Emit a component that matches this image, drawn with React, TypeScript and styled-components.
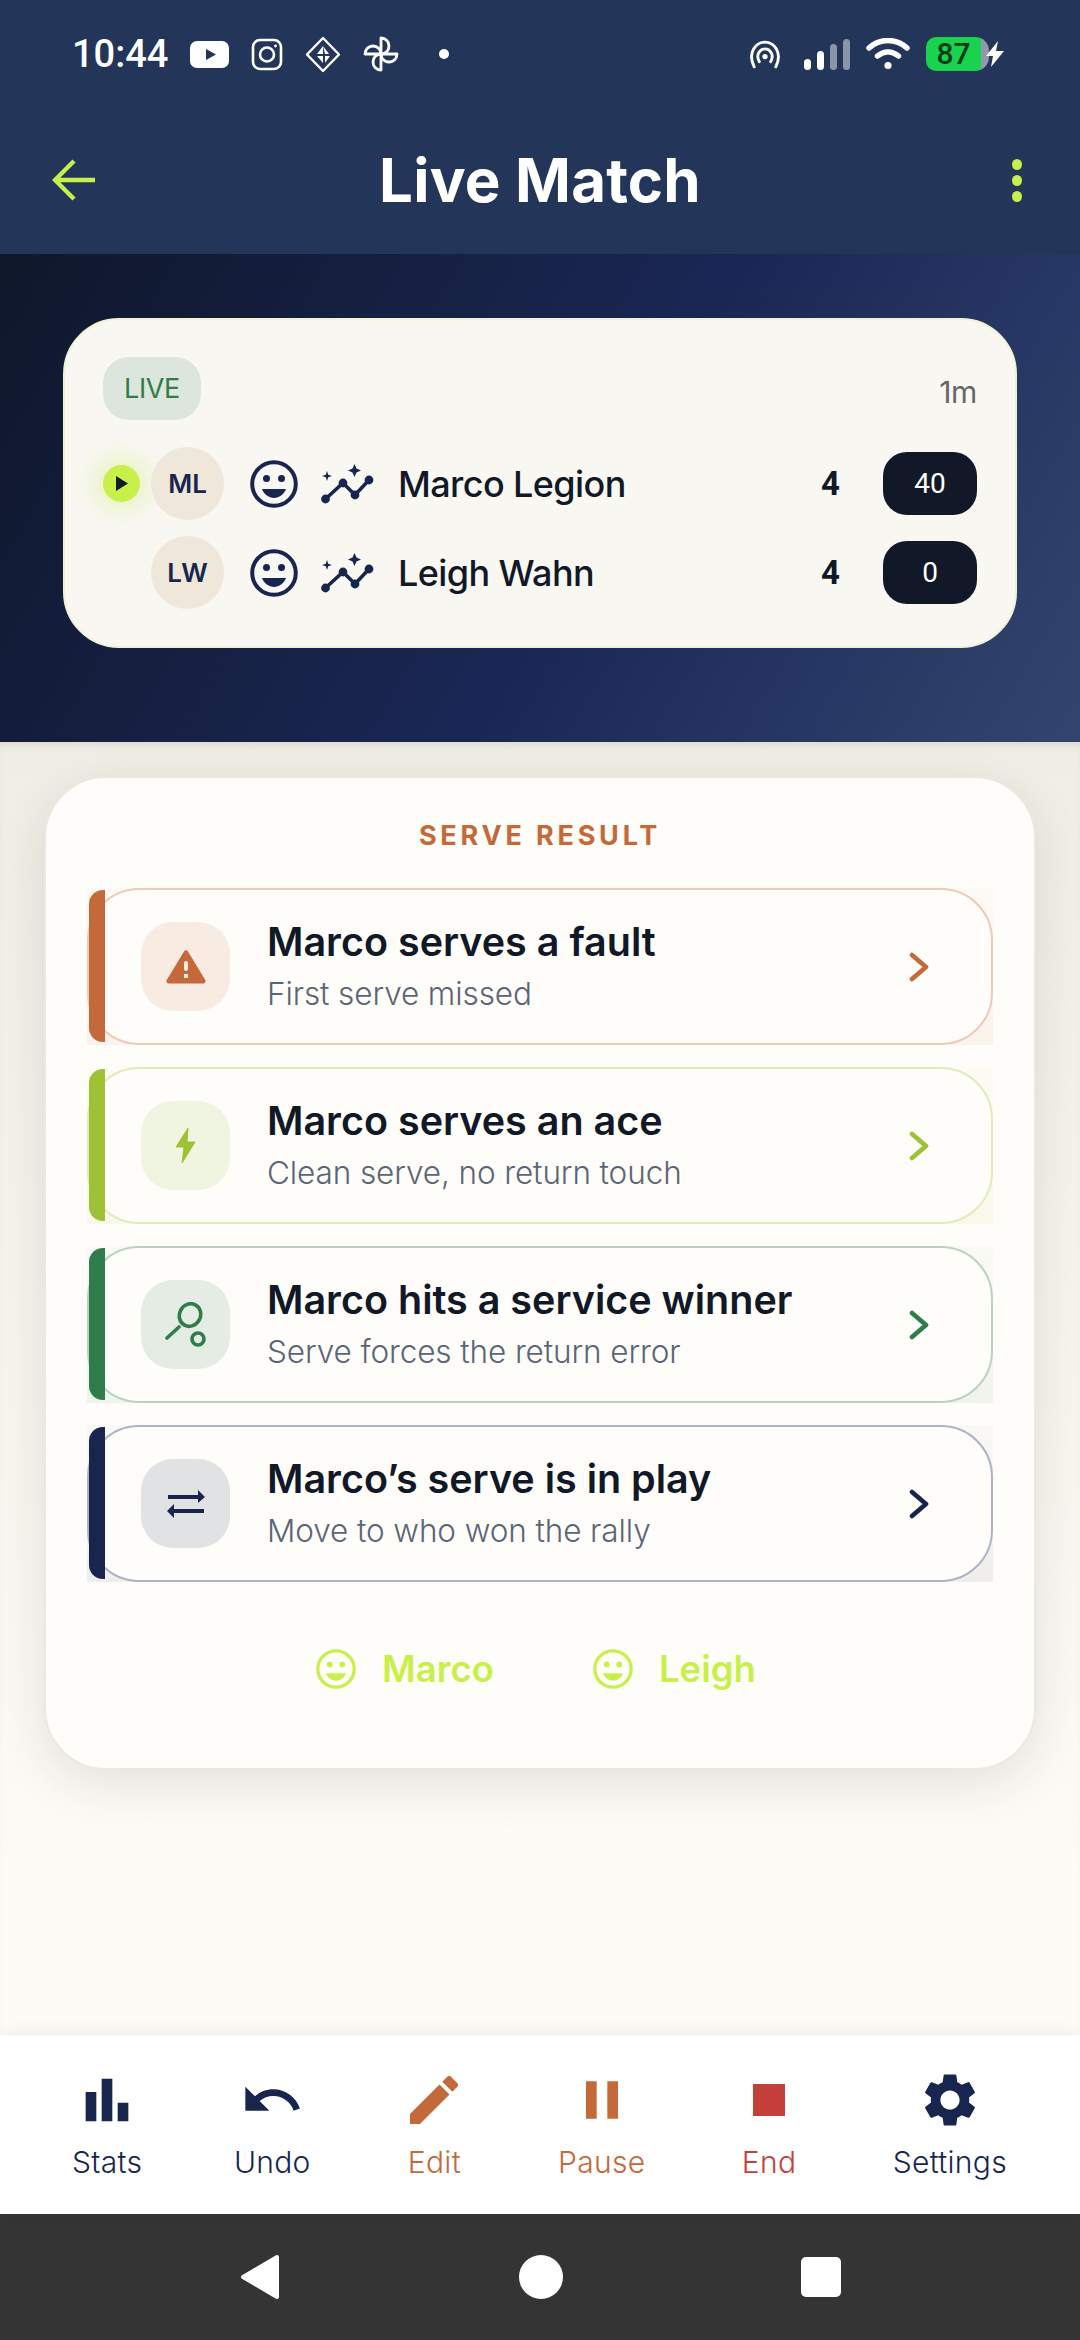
import React from 'react';
import styled, { createGlobalStyle } from 'styled-components';
import { MdBarChart, MdEdit, MdPause, MdSettings, MdStop, MdUndo } from 'react-icons/md';

const LIME = '#c8f04a';
const NAVY = '#18264f';
const INK = '#111827';
const CLAY = '#c4693a';
const RED = '#c43f3a';

interface ActionItem {
  title: string;
  subtitle: string;
  accent: string;
  tile: string;
  line: string;
  icon: React.ReactNode;
}

const Smiley: React.FC<{ size: number; color: string }> = ({ size, color }) => (
  <svg width={size} height={size} viewBox="0 0 48 48" fill={color}>
    <circle cx="24" cy="24" r="21.8" fill="none" stroke={color} strokeWidth="4" />
    <circle cx="16.5" cy="18.5" r="3.5" />
    <circle cx="31.5" cy="18.5" r="3.5" />
    <path d="M12 29 H36 C34 34.5 29 38 24 38 C19 38 14 34.5 12 29 Z" />
  </svg>
);

const WarningIcon = () => (
  <svg width="40" height="36" viewBox="0 0 40 36">
    <path d="M20 4 L37 32 H3 Z" fill={CLAY} stroke={CLAY} strokeWidth="5" strokeLinejoin="round" />
    <rect x="18" y="12" width="4" height="10" rx="2" fill="#f7ebe2" />
    <rect x="18" y="25" width="4" height="4" fill="#f7ebe2" />
  </svg>
);

const BoltIcon = () => (
  <svg width="22" height="37" viewBox="0 0 22 37">
    <path d="M13 1 L1 20 H9 L7 36 L20 15 H12 Z" fill="#9dc236" stroke="#9dc236" strokeLinejoin="round" />
  </svg>
);

const RacketIcon = () => (
  <svg width="42" height="46" viewBox="0 0 42 46" fill="none" stroke="#2f7d4b" strokeWidth="3.6" strokeLinecap="round">
    <ellipse cx="25" cy="13" rx="10.5" ry="11.5" transform="rotate(28 25 13)" />
    <path d="M14 25 L2 36" />
    <circle cx="33" cy="37" r="6" />
  </svg>
);

const SwapIcon = () => (
  <svg width="40" height="30" viewBox="0 0 40 30" fill={NAVY}>
    <path d="M2 6 H32 V1 L39 8 L32 14 V10 H2 Z" />
    <path d="M38 20 H8 V15 L1 22 L8 29 V24 H38 Z" />
  </svg>
);

const TrendIcon = () => (
  <TrendSvg viewBox="0 0 53 40" fill={NAVY}>
    <polyline points="4.5,35 22,19 34,31 48,16" fill="none" stroke={NAVY} strokeWidth="3.6" />
    <circle cx="4.5" cy="35" r="4.4" />
    <circle cx="22" cy="19" r="4.4" />
    <circle cx="34" cy="31" r="4.4" />
    <circle cx="48" cy="16" r="4.4" />
    <path d="M33.5 0 L35.5 4.5 L40 6.5 L35.5 8.5 L33.5 13 L31.5 8.5 L27 6.5 L31.5 4.5 Z" />
    <path d="M6 7 L7.2 10.8 L11 12 L7.2 13.2 L6 17 L4.8 13.2 L1 12 L4.8 10.8 Z" />
  </TrendSvg>
);

const actions: ActionItem[] = [
  {
    title: 'Marco serves a fault',
    subtitle: 'First serve missed',
    accent: CLAY,
    tile: '#f7ebe2',
    line: '#efcab7',
    icon: <WarningIcon />,
  },
  {
    title: 'Marco serves an ace',
    subtitle: 'Clean serve, no return touch',
    accent: '#9dc236',
    tile: '#f0f5e1',
    line: '#e0ecb8',
    icon: <BoltIcon />,
  },
  {
    title: 'Marco hits a service winner',
    subtitle: 'Serve forces the return error',
    accent: '#2f7d4b',
    tile: '#e4ece4',
    line: '#b8d4bf',
    icon: <RacketIcon />,
  },
  {
    title: 'Marco’s serve is in play',
    subtitle: 'Move to who won the rally',
    accent: NAVY,
    tile: '#e1e2e4',
    line: '#aeb2c6',
    icon: <SwapIcon />,
  },
];

const players = [
  { initials: 'ML', name: 'Marco Legion', games: '4', points: '40', serving: true },
  { initials: 'LW', name: 'Leigh Wahn', games: '4', points: '0', serving: false },
];

const navItems = [
  { label: 'Stats', color: NAVY, icon: <MdBarChart size={64} /> },
  { label: 'Undo', color: NAVY, icon: <MdUndo size={64} /> },
  { label: 'Edit', color: CLAY, icon: <MdEdit size={64} /> },
  { label: 'Pause', color: CLAY, icon: <MdPause size={64} /> },
  { label: 'End', color: RED, icon: <MdStop size={64} /> },
  { label: 'Settings', color: NAVY, icon: <MdSettings size={64} /> },
];

const App: React.FC = () => {
  return (
    <Screen>
      <GlobalStyle />
      <Header>
        <StatusBar>
          <StatusGroup>
            <Clock>10:44</Clock>
            <svg width="39" height="27" viewBox="0 0 39 27">
              <rect width="39" height="27" rx="7" fill="#fff" />
              <path d="M16 8 L26 13.5 L16 19 Z" fill="#24355a" />
            </svg>
            <svg width="32" height="33" viewBox="0 0 32 33" fill="none" stroke="#fff" strokeWidth="2.6">
              <rect x="2" y="2" width="28" height="29" rx="7" />
              <circle cx="16" cy="16.5" r="7" />
              <circle cx="24.5" cy="8" r="1.4" fill="#fff" stroke="none" />
            </svg>
            <svg width="36" height="37" viewBox="0 0 36 37" fill="#fff">
              <path d="M18 2 L34 18.5 L18 35 L2 18.5 Z" fill="none" stroke="#fff" strokeWidth="2.4" strokeLinejoin="round" />
              <path d="M18 10 L18 18 L12 18 Z M18 10 L24 18 L20 18 Z M12 20 L18 20 L18 27 Z M20 20 L25 20 L20 27 Z" />
            </svg>
            <svg width="36" height="36" viewBox="0 0 36 36" fill="none" stroke="#fff" strokeWidth="2.8" strokeLinejoin="round">
              <path d="M18 18 V2 A8 8 0 0 1 18 18 Z" />
              <path d="M18 18 H34 A8 8 0 0 1 18 18 Z" />
              <path d="M18 18 V34 A8 8 0 0 1 18 18 Z" />
              <path d="M18 18 H2 A8 8 0 0 1 18 18 Z" />
            </svg>
            <StatusDot />
          </StatusGroup>
          <StatusGroup $gap={16}>
            <HotspotIcon width="34" height="29" viewBox="0 0 33 28" fill="none" stroke="#fff" strokeWidth="2.8" strokeLinecap="round">
              <path d="M6 26 C-1 12 8 2 16.5 2 C25 2 34 12 27 26" />
              <path d="M11 21 C7 14 12 8.5 16.5 8.5 C21 8.5 26 14 22 21" />
              <circle cx="16.5" cy="16" r="2.6" fill="#fff" stroke="none" />
            </HotspotIcon>
            <SignalBars>
              <Bar $height={11} />
              <Bar $height={19} />
              <Bar $height={26} $dim />
              <Bar $height={31} $dim />
            </SignalBars>
            <svg width="44" height="32" viewBox="0 0 44 32" fill="none" stroke="#fff" strokeWidth="5.5" strokeLinecap="round">
              <path d="M3 10 C14 0 30 0 41 10" />
              <path d="M11.5 18 C18 12.5 26 12.5 32.5 18" />
              <circle cx="22" cy="27.5" r="3.6" fill="#fff" stroke="none" />
            </svg>
            <Battery>
              <BatteryLevel>87</BatteryLevel>
              <BatteryBolt width="22" height="26" viewBox="0 0 22 26">
                <path d="M14 0 L2 15 H9 L7 26 L20 10 H12 Z" fill="#fff" />
              </BatteryBolt>
            </Battery>
          </StatusGroup>
        </StatusBar>
        <AppBar>
          <BackArrow width="43" height="42" viewBox="0 0 43 42" fill="none" stroke={LIME} strokeWidth="4.4">
            <path d="M22 2 L3 21 L22 40 M3 21 H43" />
          </BackArrow>
          <Title>Live Match</Title>
          <Kebab>
            <i />
            <i />
            <i />
          </Kebab>
        </AppBar>
      </Header>

      <Hero>
        <ScoreCard>
          <CardTop>
            <LiveTag>LIVE</LiveTag>
            <Elapsed>1m</Elapsed>
          </CardTop>
          {players.map((player) => (
            <PlayerRow key={player.initials}>
              <ServeSlot>
                {player.serving && (
                  <ServeDot>
                    <svg width="12" height="15" viewBox="0 0 12 15">
                      <path d="M0 0 L12 7.5 L0 15 Z" fill={INK} />
                    </svg>
                  </ServeDot>
                )}
              </ServeSlot>
              <Avatar>{player.initials}</Avatar>
              <Smiley size={48} color={NAVY} />
              <TrendIcon />
              <PlayerName>{player.name}</PlayerName>
              <Games>{player.games}</Games>
              <Points>{player.points}</Points>
            </PlayerRow>
          ))}
        </ScoreCard>
      </Hero>

      <Body>
        <Panel>
          <PanelTitle>SERVE RESULT</PanelTitle>
          <ActionList>
            {actions.map((item) => (
              <ActionRow key={item.title} $accent={item.accent}>
                <AccentBar $accent={item.accent} />
                <ActionCard $line={item.line}>
                  <IconTile $bg={item.tile}>{item.icon}</IconTile>
                  <ActionText>
                    <ActionTitle>{item.title}</ActionTitle>
                    <ActionSub>{item.subtitle}</ActionSub>
                  </ActionText>
                  <svg width="20" height="30" viewBox="0 0 20 30" fill="none" stroke={item.accent} strokeWidth="4.6" strokeLinecap="round" strokeLinejoin="round">
                    <path d="M3 3 L17 15 L3 27" />
                  </svg>
                </ActionCard>
              </ActionRow>
            ))}
          </ActionList>
          <PlayerLinks>
            <PlayerLink>
              <Smiley size={40} color={LIME} />
              Marco
            </PlayerLink>
            <PlayerLink>
              <Smiley size={40} color={LIME} />
              Leigh
            </PlayerLink>
          </PlayerLinks>
        </Panel>
      </Body>

      <BottomNav>
        {navItems.map((item) => (
          <NavItem key={item.label} $color={item.color}>
            <NavIcon>{item.icon}</NavIcon>
            <span>{item.label}</span>
          </NavItem>
        ))}
      </BottomNav>

      <SystemNav>
        <svg width="42" height="46" viewBox="0 0 42 46">
          <path d="M38 3 V43 L4 23 Z" fill="#fff" stroke="#fff" strokeWidth="4" strokeLinejoin="round" />
        </svg>
        <HomeButton />
        <RecentButton />
      </SystemNav>
    </Screen>
  );
};

export default App;

const GlobalStyle = createGlobalStyle`
  html, body {
    margin: 0;
    padding: 0;
    background: #fdfbf6;
  }
  * {
    box-sizing: border-box;
  }
`;

const Screen = styled.div`
  display: flex;
  flex-direction: column;
  width: 1080px;
  height: 2340px;
  overflow: hidden;
  font-family: Inter, 'Noto Sans', sans-serif;
  color: ${INK};
`;

const Header = styled.header`
  height: 254px;
  background: #24355a;
  color: #fff;
`;

const StatusBar = styled.div`
  display: flex;
  align-items: center;
  justify-content: space-between;
  height: 108px;
  padding: 0 74px 0 72px;
`;

const StatusGroup = styled.div<{ $gap?: number }>`
  display: flex;
  align-items: center;
  gap: ${(p) => p.$gap ?? 22}px;
`;

const Clock = styled.span`
  font-family: Roboto, sans-serif;
  font-size: 38px;
  font-weight: 500;
`;

const StatusDot = styled.span`
  width: 10px;
  height: 10px;
  margin-left: 18px;
  border-radius: 50%;
  background: #fff;
`;

const HotspotIcon = styled.svg`
  margin-right: 6px;
`;

const SignalBars = styled.div`
  display: flex;
  align-items: flex-end;
  gap: 6px;
  height: 32px;
`;

const Bar = styled.span<{ $height: number; $dim?: boolean }>`
  width: 7px;
  height: ${(p) => p.$height}px;
  border-radius: 4px;
  background: ${(p) => (p.$dim ? '#8c94a8' : '#fff')};
`;

const Battery = styled.div`
  display: flex;
  align-items: center;
`;

const BatteryLevel = styled.span`
  width: 63px;
  height: 34px;
  padding-right: 8px;
  border-radius: 10px 14px 14px 10px;
  background: linear-gradient(90deg, #19d24d 87%, #9299aa 87%);
  color: #0b3a1a;
  font-family: Roboto, sans-serif;
  font-size: 30px;
  font-weight: 500;
  line-height: 34px;
  text-align: center;
`;

const BatteryBolt = styled.svg`
  margin-left: -5px;
`;

const AppBar = styled.div`
  display: grid;
  grid-template-columns: 1fr auto 1fr;
  align-items: center;
  height: 146px;
  padding: 0 58px 2px;
`;

const BackArrow = styled.svg`
  margin-left: -6px;
`;

const Title = styled.h1`
  margin: 0;
  font-size: 60px;
  font-weight: 700;
  letter-spacing: 0.2px;
`;

const Kebab = styled.div`
  display: flex;
  flex-direction: column;
  justify-self: end;
  gap: 5px;

  i {
    display: block;
    width: 10px;
    height: 11px;
    border-radius: 50%;
    background: ${LIME};
  }
`;

const Hero = styled.section`
  height: 488px;
  padding: 64px 63px 0;
  background: linear-gradient(120deg, #0f172a 0%, #1a2755 55%, #33456f 100%);
`;

const ScoreCard = styled.div`
  display: flex;
  flex-direction: column;
  gap: 16px;
  height: 330px;
  padding: 37px 38px 0;
  border: 2px solid #eef4d4;
  border-radius: 56px;
  background: #f8f7f2;
`;

const CardTop = styled.div`
  display: flex;
  align-items: center;
  justify-content: space-between;
  margin-bottom: 11px;
`;

const LiveTag = styled.span`
  display: flex;
  align-items: center;
  justify-content: center;
  width: 98px;
  height: 63px;
  border-radius: 26px;
  background: #dce6dc;
  color: #2f7d4b;
  font-size: 27px;
  letter-spacing: -0.4px;
`;

const Elapsed = styled.span`
  margin-top: 6px;
  color: #666;
  font-size: 30px;
  letter-spacing: -0.4px;
`;

const PlayerRow = styled.div`
  display: flex;
  align-items: center;
  height: 73px;
`;

const ServeSlot = styled.div`
  width: 37px;
  margin-right: 11px;
`;

const ServeDot = styled.div`
  display: flex;
  align-items: center;
  justify-content: center;
  width: 37px;
  height: 37px;
  border-radius: 50%;
  background: ${LIME};
  box-shadow: 0 0 22px 8px rgba(200, 240, 74, 0.3);
`;

const Avatar = styled.div`
  display: flex;
  align-items: center;
  justify-content: center;
  width: 73px;
  height: 73px;
  margin-right: 26px;
  border-radius: 50%;
  background: #efe7da;
  color: ${NAVY};
  font-size: 26px;
  font-weight: 600;
`;

const TrendSvg = styled.svg`
  width: 53px;
  height: 40px;
  margin: 0 24px 0 23px;
`;

const PlayerName = styled.span`
  flex: 1;
  font-size: 36px;
  font-weight: 500;
  letter-spacing: -0.6px;
`;

const Games = styled.span`
  margin-right: 43px;
  font-family: Roboto, sans-serif;
  font-size: 33px;
  font-weight: 700;
`;

const Points = styled.span`
  width: 94px;
  height: 63px;
  border-radius: 24px;
  background: ${INK};
  color: #fff;
  font-family: Roboto, sans-serif;
  font-size: 28px;
  line-height: 63px;
  text-align: center;
`;

const Body = styled.main`
  flex: 1;
  padding: 34px 44px 0;
  background: linear-gradient(180deg, #f0ede4 0%, #fdfbf6 88%);
  box-shadow: inset 0 6px 8px -4px rgba(0, 0, 0, 0.1);
`;

const Panel = styled.div`
  height: 994px;
  padding: 42px 41px 0;
  border: 2px solid #ebe8df;
  border-radius: 62px;
  background: #fffdf9;
  box-shadow: 0 14px 50px rgba(40, 35, 25, 0.11);
`;

const PanelTitle = styled.div`
  color: ${CLAY};
  font-size: 27px;
  font-weight: 700;
  letter-spacing: 3.8px;
  line-height: 32px;
  text-align: center;
`;

const ActionList = styled.div`
  display: flex;
  flex-direction: column;
  gap: 22px;
  margin-top: 36px;
`;

const ActionRow = styled.div<{ $accent: string }>`
  position: relative;
  height: 157px;
  background: linear-gradient(180deg, ${(p) => p.$accent}06, ${(p) => p.$accent}12);
`;

const AccentBar = styled.span<{ $accent: string }>`
  position: absolute;
  top: 2px;
  bottom: 3px;
  left: 2px;
  width: 16px;
  border-radius: 14px 0 0 14px;
  background: ${(p) => p.$accent};
`;

const ActionCard = styled.div<{ $line: string }>`
  display: flex;
  align-items: center;
  height: 100%;
  padding: 0 62px 0 52px;
  border: 2.5px solid ${(p) => p.$line};
  border-radius: 52px;
  background: #fffdf9;
`;

const IconTile = styled.div<{ $bg: string }>`
  display: flex;
  align-items: center;
  justify-content: center;
  width: 89px;
  height: 89px;
  margin-right: 37px;
  border-radius: 32px;
  background: ${(p) => p.$bg};
`;

const ActionText = styled.div`
  display: flex;
  flex: 1;
  flex-direction: column;
  gap: 12px;
  margin-top: -2px;
`;

const ActionTitle = styled.span`
  font-size: 39.5px;
  font-weight: 600;
  line-height: 44px;
`;

const ActionSub = styled.span`
  color: #5b6577;
  font-size: 31.5px;
  font-weight: 300;
  line-height: 36px;
  letter-spacing: -0.1px;
`;

const PlayerLinks = styled.div`
  display: flex;
  justify-content: center;
  gap: 99px;
  margin-top: 65px;
  padding-right: 8px;
`;

const PlayerLink = styled.div`
  display: flex;
  align-items: center;
  gap: 26px;
  color: ${LIME};
  font-size: 36.5px;
  font-weight: 600;
`;

const BottomNav = styled.nav`
  display: flex;
  justify-content: space-between;
  height: 179px;
  padding: 33px 73px 0 72px;
  background: #fff;
  box-shadow: 0 -4px 14px rgba(0, 0, 0, 0.05);
  z-index: 1;
`;

const NavItem = styled.div<{ $color: string }>`
  display: flex;
  flex-direction: column;
  align-items: center;
  gap: 12px;
  color: ${(p) => p.$color};
  font-size: 30px;
  font-weight: 300;
  letter-spacing: 0.3px;
`;

const NavIcon = styled.div`
  display: flex;
  align-items: center;
  justify-content: center;
  height: 64px;
`;

const SystemNav = styled.div`
  display: flex;
  align-items: center;
  justify-content: space-between;
  height: 126px;
  padding: 0 239px;
  background: #343434;
`;

const HomeButton = styled.span`
  width: 44px;
  height: 44px;
  border-radius: 50%;
  background: #fff;
`;

const RecentButton = styled.span`
  width: 40px;
  height: 40px;
  border-radius: 5px;
  background: #fff;
`;
